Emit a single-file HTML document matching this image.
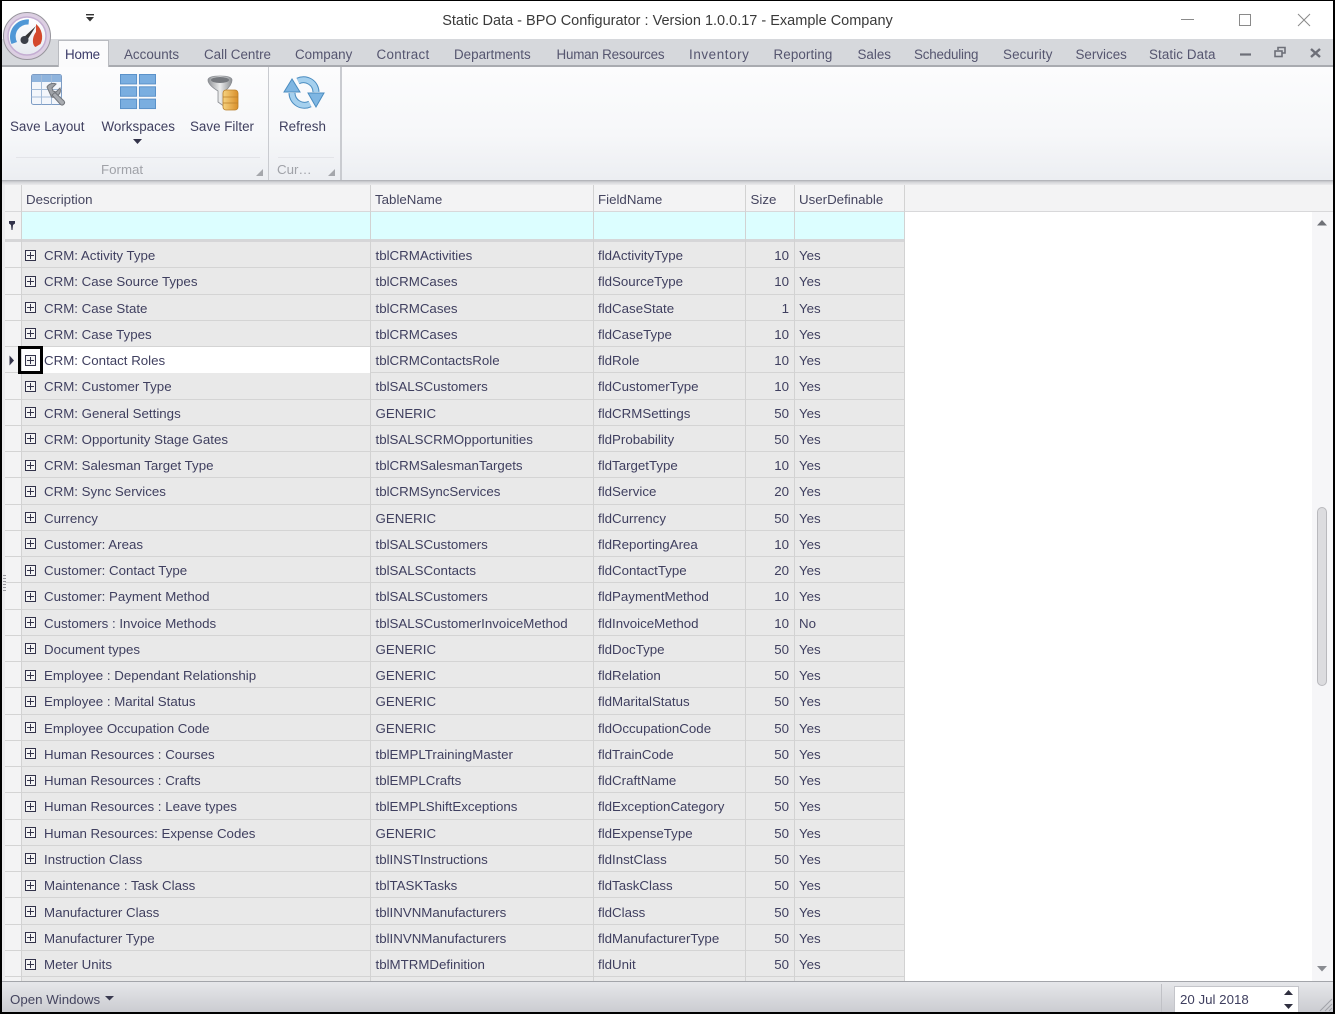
<!DOCTYPE html>
<html><head><meta charset="utf-8"><title>Static Data</title>
<style>
html,body{margin:0;padding:0;background:#fff}
body{width:1335px;height:1014px;overflow:hidden;position:relative;font:13.3px "Liberation Sans",sans-serif;color:#3f3f5f;filter:blur(.35px)}
.a{position:absolute;white-space:nowrap}
.tab{position:absolute;top:47px;line-height:16px;color:#55556f;font-size:13.4px}
.rb{position:absolute;top:118px;line-height:17px;color:#3f3f5f;font-size:13.4px}
.h{position:absolute;top:192px;line-height:16px;color:#45455f}
.r{position:absolute;left:22px;width:883px;height:25.26px;top:calc(242px + var(--i)*26.26px);border-bottom:1px solid #d4d4d4}
.r span{position:absolute;top:6px;line-height:16px;white-space:nowrap}
.r span:nth-of-type(1){left:22px}
.r span:nth-of-type(2){left:353.5px}
.r span:nth-of-type(3){left:576px}
.r span:nth-of-type(4){right:116px}
.r span:nth-of-type(5){left:777px}
.r i{position:absolute;left:3px;top:7.5px;width:9px;height:9px;border:1px solid #33334a;
background:linear-gradient(#33334a,#33334a) center/7px 1px no-repeat,linear-gradient(#33334a,#33334a) center/1px 7px no-repeat,#f4f4f4}
.v{position:absolute;width:1px;background:#d2d2d2}
.ind{position:absolute;left:5px;width:16px;height:25.26px;border-bottom:1px solid #d4d4d4;top:calc(242px + var(--i)*26.26px)}
</style></head><body>

<!-- title bar -->
<div class="a" style="left:0;top:13px;width:1335px;text-align:center;line-height:16px;color:#3a3a3a;font-size:14.5px">Static Data - BPO Configurator : Version 1.0.0.17 - Example Company</div>
<svg class="a" style="left:84px;top:13px" width="12" height="10"><rect x="2" y="1" width="8" height="1.4" fill="#333"/><path d="M2 4h8l-4 4.500z" fill="#333"/></svg>
<svg class="a" style="left:1175px;top:10px" width="145" height="20" fill="none" stroke="#8a8a8a" stroke-width="1"><path d="M6 9.500h13"/><rect x="64.500" y="4.500" width="11" height="11"/><path d="M123 4l12 12M135 4l-12 12"/></svg>

<!-- tab strip -->
<div class="a" style="left:2px;top:39px;width:1331px;height:27px;background:#d6d8dc"></div>
<div class="a" style="left:2px;top:65px;width:1331px;height:1.500px;background:#a9abb0"></div>
<div class="a" style="left:58px;top:40px;width:51px;height:27px;background:#fbfbfc;border:1px solid #b9bbc0;border-bottom:0;box-sizing:border-box"></div>
<div class="tab" style="left:65px;color:#3a3a68;letter-spacing:-.2px">Home</div>
<div class="tab" style="left:124px">Accounts</div>
<div class="tab" style="left:204px">Call Centre</div>
<div class="tab" style="left:295px">Company</div>
<div class="tab" style="left:376.500px;letter-spacing:.3px">Contract</div>
<div class="tab" style="left:454px">Departments</div>
<div class="tab" style="left:556.500px;letter-spacing:-.2px">Human Resources</div>
<div class="tab" style="left:689px;letter-spacing:.6px">Inventory</div>
<div class="tab" style="left:773.500px;letter-spacing:.1px">Reporting</div>
<div class="tab" style="left:857.500px">Sales</div>
<div class="tab" style="left:914px;letter-spacing:-.2px">Scheduling</div>
<div class="tab" style="left:1003px;letter-spacing:.15px">Security</div>
<div class="tab" style="left:1075.500px">Services</div>
<div class="tab" style="left:1149px;letter-spacing:.1px">Static Data</div>
<svg class="a" style="left:1238px;top:45px" width="86" height="14"><path d="M2 9.500h11" stroke="#6d6f78" stroke-width="2.200"/><g fill="none" stroke="#6d6f78" stroke-width="1.600"><rect x="37" y="6" width="7" height="5.500"/><path d="M40 5V2.500h7v5.500h-3"/></g><path d="M73 4l9 8M82 4l-9 8" stroke="#6d6f78" stroke-width="2.400"/></svg>

<!-- logo -->
<svg class="a" style="left:2px;top:11px" width="50" height="50" viewBox="0 0 50 50">
<defs><linearGradient id="lg" x1="0" y1="0" x2="0" y2="1"><stop offset="0" stop-color="#fff"/><stop offset="1" stop-color="#e6e9ef"/></linearGradient></defs>
<circle cx="25" cy="25" r="23.500" fill="#dccfe2" stroke="#97959c" stroke-width="1"/>
<circle cx="25" cy="25" r="19" fill="url(#lg)" stroke="#c4aed2" stroke-width="1.500"/>
<path d="M9.500 33A17.500 17.500 0 0 1 27 8.500l-.5 5A12 12 0 0 0 15 31z" fill="#4f97d6"/>
<path d="M34 13A16.500 16.500 0 0 1 38.500 33l-5 3C30 34 30 26 34 21z" fill="#d4492c"/>
<path d="M20 28L34 15l-10 16z" fill="#333"/>
<circle cx="22.500" cy="29" r="4" fill="#3b3f48"/>
</svg>

<!-- ribbon -->
<div class="a" style="left:2px;top:67px;width:1331px;height:113px;background:linear-gradient(#fcfcfd,#f6f7f9 60%,#eceef2)"></div>
<div class="a" style="left:2px;top:180px;width:1331px;height:5px;background:linear-gradient(#a9abb0,#d2d3d7 40%,#ebebed)"></div>
<div class="a" style="left:267.500px;top:67px;width:1.500px;height:113px;background:#c9cbd0"></div>
<div class="a" style="left:340px;top:67px;width:1.500px;height:113px;background:#c9cbd0"></div>
<div class="a" style="left:16px;top:157px;width:244px;height:1px;background:#e3e4e8"></div>
<div class="a" style="left:278px;top:157px;width:56px;height:1px;background:#e3e4e8"></div>

<svg class="a" style="left:28px;top:72px" width="42" height="42" viewBox="0 0 42 42">
<rect x="3.500" y="2.500" width="30" height="30" rx="2" fill="#f3f6fb" stroke="#7d9cc4"/>
<rect x="4" y="3" width="29" height="7" fill="#8fb4dd"/>
<path d="M3.500 17.500h30M3.500 25h30M13.500 3v29.500M23.500 3v29.500" stroke="#a4bcd9" fill="none"/>
<path d="M19 15a7 7 0 0 1 9-3l-4 4 1 3 3 1 4-4a7 7 0 0 1-8.500 9z" fill="#a0a3a8" stroke="#72757b" stroke-width="1"/>
<path d="M24 23l8.500 9.500a2.500 2.500 0 0 0 3.500-3.500L27 20.500z" fill="#a9acb1" stroke="#72757b" stroke-width="1"/>
</svg>
<svg class="a" style="left:120px;top:74px" width="36" height="36" viewBox="0 0 38 38" fill="#7aaee0" stroke="#5a90c8">
<rect x=".5" y=".5" width="17" height="10"/><rect x="20.500" y=".5" width="17" height="10"/>
<rect x=".5" y="13.500" width="17" height="10"/><rect x="20.500" y="13.500" width="17" height="10"/>
<rect x=".5" y="26.500" width="17" height="10"/><rect x="20.500" y="26.500" width="17" height="10"/>
</svg>
<svg class="a" style="left:206px;top:73px" width="36" height="40" viewBox="0 0 36 40">
<defs><linearGradient id="fn" x1="0" x2="1"><stop offset="0" stop-color="#8f9296"/><stop offset=".5" stop-color="#eceded"/><stop offset="1" stop-color="#8b8e92"/></linearGradient>
<linearGradient id="db" x1="0" x2="1"><stop offset="0" stop-color="#f6d27f"/><stop offset="1" stop-color="#d98f2a"/></linearGradient></defs>
<path d="M2 7Q2 3 14 3T26 7Q26 12 19 18V34L12 29V18Q2 12 2 7z" fill="url(#fn)" stroke="#8a8d92" stroke-width=".8"/>
<ellipse cx="14" cy="7" rx="9" ry="3" fill="#75787d"/>
<rect x="17" y="17" width="15" height="20" rx="3" fill="url(#db)" stroke="#b97f2b" stroke-width=".8"/>
<path d="M17 24h15M17 30h15" stroke="#b97f2b" stroke-width=".8"/>
</svg>
<svg class="a" style="left:283px;top:75px" width="42" height="36" viewBox="0 0 42 36" fill="none">
<path d="M9 18A12.500 12.500 0 0 0 27 29" stroke="#4a8cc0" stroke-width="7"/>
<path d="M33 17A12.500 12.500 0 0 0 15 6" stroke="#4a8cc0" stroke-width="7"/>
<path d="M9 18A12.500 12.500 0 0 0 27 29" stroke="#a5d0ee" stroke-width="5"/>
<path d="M33 17A12.500 12.500 0 0 0 15 6" stroke="#a5d0ee" stroke-width="5"/>
<path d="M9 4L1 17h16zM33 32L25 18h16z" fill="#7fb6e2" stroke="#4a8cc0"/>
</svg>

<div class="rb" style="left:10px">Save Layout</div>
<div class="rb" style="left:101.500px">Workspaces</div>
<div class="rb" style="left:190px">Save Filter</div>
<div class="rb" style="left:279px">Refresh</div>
<svg class="a" style="left:133px;top:139px" width="10" height="6"><path d="M0 0h9l-4.500 5z" fill="#33334a"/></svg>
<div class="a" style="left:101px;top:162px;line-height:16px;color:#a0a2a8">Format</div>
<div class="a" style="left:277px;top:162px;line-height:16px;color:#a0a2a8">Cur…</div>
<svg class="a" style="left:256px;top:169px" width="80" height="8" fill="#a5a7ac"><path d="M7 0v7H0z"/><path d="M79 0v7h-7z"/></svg>

<!-- grid header -->
<div class="a" style="left:5px;top:185px;width:1328px;height:27px;background:#f3f3f4;border-bottom:1px solid #d8d8da;box-sizing:border-box"></div>
<div class="h" style="left:26px">Description</div>
<div class="h" style="left:375px">TableName</div>
<div class="h" style="left:598px">FieldName</div>
<div class="h" style="left:750.500px">Size</div>
<div class="h" style="left:799px">UserDefinable</div>

<!-- filter -->
<div class="a" style="left:5px;top:212px;width:17px;height:27px;background:#f3f3f4"></div>
<svg class="a" style="left:8px;top:221px" width="8" height="10"><path d="M1 0h6v2.500L5 4 4.500 9h-1L3 4 1 2.500z" fill="#33334a"/></svg>
<div class="a" style="left:22px;top:212px;width:883px;height:27px;background:#dcfeff"></div>
<div class="a" style="left:5px;top:239px;width:900px;height:3px;background:#d6d6d8"></div>

<!-- row and indicator backgrounds -->
<div class="a" style="left:22px;top:242px;width:883px;height:739px;background:#e9e9e9"></div>
<div class="a" style="left:5px;top:242px;width:17px;height:739px;background:#f3f3f4"></div>

<!-- rows -->
<div class="r" style="--i:0"><span>CRM: Activity Type</span><span>tblCRMActivities</span><span>fldActivityType</span><span>10</span><span>Yes</span><i></i></div>
<div class="r" style="--i:1"><span>CRM: Case Source Types</span><span>tblCRMCases</span><span>fldSourceType</span><span>10</span><span>Yes</span><i></i></div>
<div class="r" style="--i:2"><span>CRM: Case State</span><span>tblCRMCases</span><span>fldCaseState</span><span>1</span><span>Yes</span><i></i></div>
<div class="r" style="--i:3"><span>CRM: Case Types</span><span>tblCRMCases</span><span>fldCaseType</span><span>10</span><span>Yes</span><i></i></div>
<div class="r" style="--i:4"><b style="position:absolute;left:0;top:0;width:348px;height:26px;background:#fff"></b><span>CRM: Contact Roles</span><span>tblCRMContactsRole</span><span>fldRole</span><span>10</span><span>Yes</span><i></i></div>
<div class="r" style="--i:5"><span>CRM: Customer Type</span><span>tblSALSCustomers</span><span>fldCustomerType</span><span>10</span><span>Yes</span><i></i></div>
<div class="r" style="--i:6"><span>CRM: General Settings</span><span>GENERIC</span><span>fldCRMSettings</span><span>50</span><span>Yes</span><i></i></div>
<div class="r" style="--i:7"><span>CRM: Opportunity Stage Gates</span><span>tblSALSCRMOpportunities</span><span>fldProbability</span><span>50</span><span>Yes</span><i></i></div>
<div class="r" style="--i:8"><span>CRM: Salesman Target Type</span><span>tblCRMSalesmanTargets</span><span>fldTargetType</span><span>10</span><span>Yes</span><i></i></div>
<div class="r" style="--i:9"><span>CRM: Sync Services</span><span>tblCRMSyncServices</span><span>fldService</span><span>20</span><span>Yes</span><i></i></div>
<div class="r" style="--i:10"><span>Currency</span><span>GENERIC</span><span>fldCurrency</span><span>50</span><span>Yes</span><i></i></div>
<div class="r" style="--i:11"><span>Customer: Areas</span><span>tblSALSCustomers</span><span>fldReportingArea</span><span>10</span><span>Yes</span><i></i></div>
<div class="r" style="--i:12"><span>Customer: Contact Type</span><span>tblSALSContacts</span><span>fldContactType</span><span>20</span><span>Yes</span><i></i></div>
<div class="r" style="--i:13"><span>Customer: Payment Method</span><span>tblSALSCustomers</span><span>fldPaymentMethod</span><span>10</span><span>Yes</span><i></i></div>
<div class="r" style="--i:14"><span>Customers : Invoice Methods</span><span>tblSALSCustomerInvoiceMethod</span><span>fldInvoiceMethod</span><span>10</span><span>No</span><i></i></div>
<div class="r" style="--i:15"><span>Document types</span><span>GENERIC</span><span>fldDocType</span><span>50</span><span>Yes</span><i></i></div>
<div class="r" style="--i:16"><span>Employee : Dependant Relationship</span><span>GENERIC</span><span>fldRelation</span><span>50</span><span>Yes</span><i></i></div>
<div class="r" style="--i:17"><span>Employee : Marital Status</span><span>GENERIC</span><span>fldMaritalStatus</span><span>50</span><span>Yes</span><i></i></div>
<div class="r" style="--i:18"><span>Employee Occupation Code</span><span>GENERIC</span><span>fldOccupationCode</span><span>50</span><span>Yes</span><i></i></div>
<div class="r" style="--i:19"><span>Human Resources : Courses</span><span>tblEMPLTrainingMaster</span><span>fldTrainCode</span><span>50</span><span>Yes</span><i></i></div>
<div class="r" style="--i:20"><span>Human Resources : Crafts</span><span>tblEMPLCrafts</span><span>fldCraftName</span><span>50</span><span>Yes</span><i></i></div>
<div class="r" style="--i:21"><span>Human Resources : Leave types</span><span>tblEMPLShiftExceptions</span><span>fldExceptionCategory</span><span>50</span><span>Yes</span><i></i></div>
<div class="r" style="--i:22"><span>Human Resources: Expense Codes</span><span>GENERIC</span><span>fldExpenseType</span><span>50</span><span>Yes</span><i></i></div>
<div class="r" style="--i:23"><span>Instruction Class</span><span>tblINSTInstructions</span><span>fldInstClass</span><span>50</span><span>Yes</span><i></i></div>
<div class="r" style="--i:24"><span>Maintenance : Task Class</span><span>tblTASKTasks</span><span>fldTaskClass</span><span>50</span><span>Yes</span><i></i></div>
<div class="r" style="--i:25"><span>Manufacturer Class</span><span>tblINVNManufacturers</span><span>fldClass</span><span>50</span><span>Yes</span><i></i></div>
<div class="r" style="--i:26"><span>Manufacturer Type</span><span>tblINVNManufacturers</span><span>fldManufacturerType</span><span>50</span><span>Yes</span><i></i></div>
<div class="r" style="--i:27"><span>Meter Units</span><span>tblMTRMDefinition</span><span>fldUnit</span><span>50</span><span>Yes</span><i></i></div>

<!-- indicator column -->
<div class="ind" style="--i:0"></div><div class="ind" style="--i:1"></div><div class="ind" style="--i:2"></div><div class="ind" style="--i:3"></div><div class="ind" style="--i:4"></div><div class="ind" style="--i:5"></div><div class="ind" style="--i:6"></div><div class="ind" style="--i:7"></div><div class="ind" style="--i:8"></div><div class="ind" style="--i:9"></div><div class="ind" style="--i:10"></div><div class="ind" style="--i:11"></div><div class="ind" style="--i:12"></div><div class="ind" style="--i:13"></div><div class="ind" style="--i:14"></div><div class="ind" style="--i:15"></div><div class="ind" style="--i:16"></div><div class="ind" style="--i:17"></div><div class="ind" style="--i:18"></div><div class="ind" style="--i:19"></div><div class="ind" style="--i:20"></div><div class="ind" style="--i:21"></div><div class="ind" style="--i:22"></div><div class="ind" style="--i:23"></div><div class="ind" style="--i:24"></div><div class="ind" style="--i:25"></div><div class="ind" style="--i:26"></div><div class="ind" style="--i:27"></div>

<!-- column lines -->
<div class="v" style="left:21px;top:185px;height:796px"></div>
<div class="v" style="left:370px;top:185px;height:796px"></div>
<div class="v" style="left:593px;top:185px;height:796px"></div>
<div class="v" style="left:745px;top:185px;height:796px"></div>
<div class="v" style="left:794px;top:185px;height:796px"></div>
<div class="v" style="left:904px;top:185px;height:796px"></div>

<!-- selection -->
<svg class="a" style="left:9px;top:355px" width="6" height="11"><path d="M.5 .5l4.500 5-4.500 5z" fill="#33334a"/></svg>
<div class="a" style="left:18px;top:346px;width:25px;height:28px;border:3px solid #000;box-sizing:border-box"></div>

<!-- scrollbar -->
<div class="a" style="left:1312px;top:212px;width:21px;height:769px;background:#f6f6f8"></div>
<svg class="a" style="left:1317px;top:220px" width="10" height="6"><path d="M5 0l5 5.500H0z" fill="#6f7177"/></svg>
<svg class="a" style="left:1317px;top:966px" width="10" height="6"><path d="M0 0h10L5 5.500z" fill="#8a8c92"/></svg>
<div class="a" style="left:1317px;top:507px;width:10px;height:179px;background:#dcdcdf;border:1.500px solid #b9b9bd;border-radius:5px;box-sizing:border-box"></div>

<!-- left splitter -->
<div class="a" style="left:2px;top:185px;width:3px;height:796px;background:#ececee"></div>
<div class="a" style="left:3px;top:575px;width:3px;height:18px;background:repeating-linear-gradient(#9a9aa0 0 1px,transparent 1px 3px)"></div>

<!-- status bar -->
<div class="a" style="left:2px;top:981px;width:1331px;height:31px;background:linear-gradient(#e6e7ea,#cbccd1);border-top:1.500px solid #a3a5aa;box-sizing:border-box"></div>
<div class="a" style="left:10px;top:992px;line-height:16px;color:#45455f">Open Windows</div>
<svg class="a" style="left:105px;top:996px" width="10" height="6"><path d="M0 0h9l-4.500 4.500z" fill="#3a3a50"/></svg>
<div class="a" style="left:1161px;top:984px;width:1px;height:28px;background:#c0c1c6"></div>
<div class="a" style="left:1174px;top:986px;width:125px;height:26px;background:#fff;border:1px solid #c4c5ca;border-bottom:0;box-sizing:border-box"></div>
<div class="a" style="left:1180px;top:992px;line-height:16px;color:#3f3f5f">20 Jul 2018</div>
<svg class="a" style="left:1283px;top:990px" width="11" height="20"><path d="M5.500 0l4.500 5H1z" fill="#2f2f3f"/><path d="M1 14h9l-4.500 5z" fill="#2f2f3f"/></svg>
<svg class="a" style="left:1317px;top:996px" width="16" height="16" stroke="#a0a2a8" fill="none"><path d="M15 3L3 15M15 8l-7 7M15 12l-3 3"/></svg>

<!-- window frame -->
<div class="a" style="left:0;top:0;width:1335px;height:1014px;border:solid #000;border-width:1.500px 2px 2px 2px;box-sizing:border-box"></div>
</body></html>
